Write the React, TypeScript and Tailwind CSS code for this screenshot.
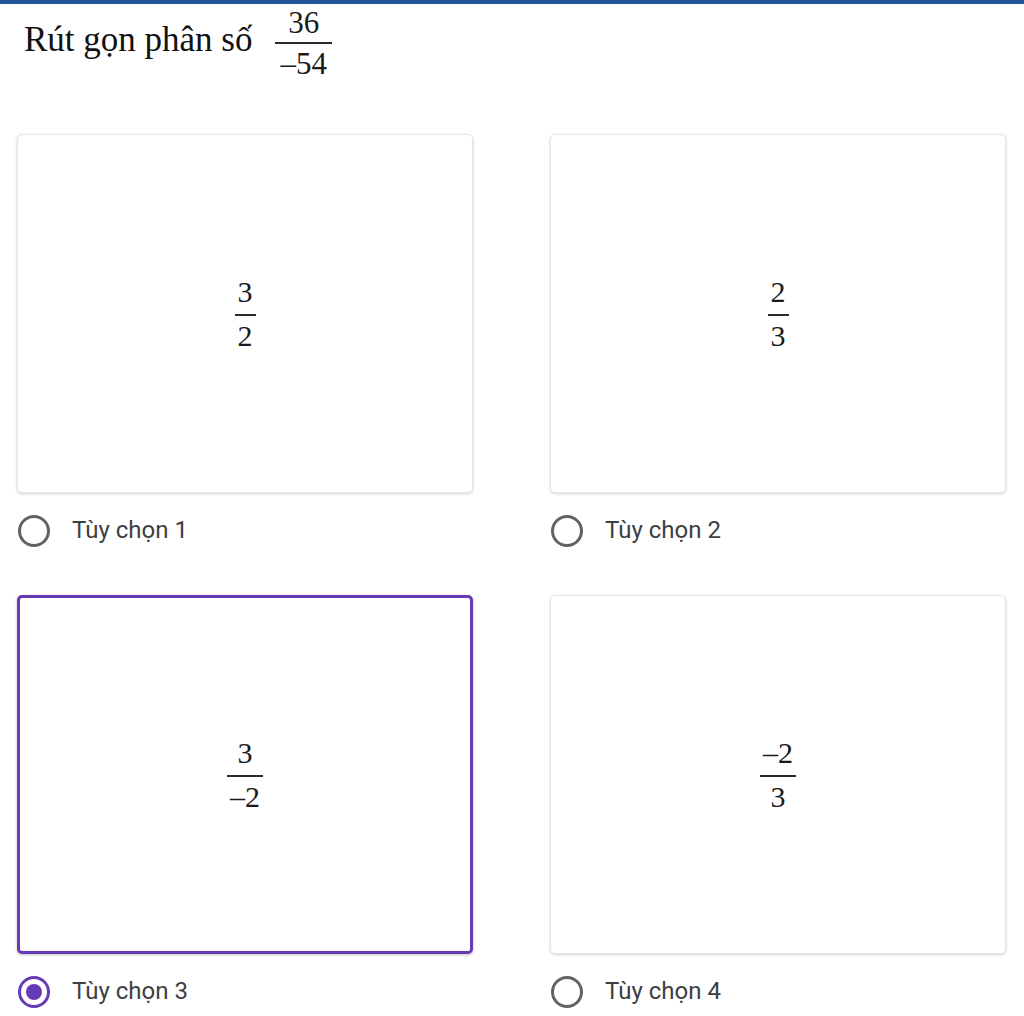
import React from "react";

const serif = "font-['Liberation_Serif','Times_New_Roman',serif]";

type FracProps = { top: string; bottom: string; title?: boolean };

const Frac = ({ top, bottom, title }: FracProps) => (
  <span
    className={`inline-flex flex-col items-center ${serif} ${
      title ? "text-[31px]" : "text-[30px]"
    } leading-none text-[#1a1a1a]`}
  >
    <span className={title ? "px-[5px] pb-[4px]" : "px-[3px] pb-[7px]"}>{top}</span>
    <span className="w-full border-t-[2px] border-[#2a2a2a]" />
    <span className={title ? "px-[5px] pt-[4px]" : "px-[3px] pt-[5px]"}>{bottom}</span>
  </span>
);

type Option = { top: string; bottom: string; label: string; selected?: boolean };

const options: Option[] = [
  { top: "3", bottom: "2", label: "Tùy chọn 1" },
  { top: "2", bottom: "3", label: "Tùy chọn 2" },
  { top: "3", bottom: "\u20132", label: "Tùy chọn 3", selected: true },
  { top: "\u20132", bottom: "3", label: "Tùy chọn 4" },
];

const Radio = ({ checked }: { checked?: boolean }) =>
  checked ? (
    <span className="flex h-[32px] w-[32px] items-center justify-center rounded-full border-[3px] border-[#673ab7]">
      <span className="h-[16px] w-[16px] rounded-full bg-[#673ab7]" />
    </span>
  ) : (
    <span className="h-[32px] w-[32px] rounded-full border-[3px] border-[#5f6368]" />
  );

const OptionCard = ({ opt }: { opt: Option }) => (
  <div className="flex flex-col">
    <div
      className={`flex h-[359px] items-center justify-center rounded-[5px] bg-white ${
        opt.selected
          ? "border-[3px] border-[#673ab7] shadow-[0_1px_3px_rgba(0,0,0,0.25)]"
          : "border border-[#e6e6e6] shadow-[0_1px_3px_rgba(0,0,0,0.18)]"
      }`}
    >
      <Frac top={opt.top} bottom={opt.bottom} />
    </div>
    <label className="mt-[22px] flex h-[32px] items-center gap-[22px] pl-[1px]">
      <Radio checked={opt.selected} />
      <span className="-mt-[2px] font-['Roboto',sans-serif] text-[24px] leading-none text-[#3c4043]">
        {opt.label}
      </span>
    </label>
  </div>
);

export default function App() {
  return (
    <div className="min-h-[1016px] w-[1024px] bg-white">
      <div className="h-[4px] bg-[#1f5596]" />
      <div className="flex h-[130px] items-start gap-[23px] pl-[24px] pt-[3px]">
        <span className={`${serif} mt-[15px] text-[35px] leading-none text-[#111]`}>Rút gọn phân số</span>
        <Frac top="36" bottom={"\u201354"} title />
      </div>
      <div className="grid grid-cols-2 gap-x-[77px] gap-y-[48px] pl-[17px] pr-[18px]">
        {options.map((o) => (
          <OptionCard key={o.label} opt={o} />
        ))}
      </div>
    </div>
  );
}
